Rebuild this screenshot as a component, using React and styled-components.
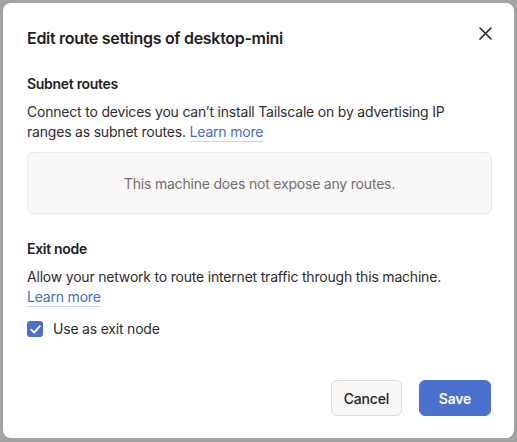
import React from 'react';
import styled, { createGlobalStyle } from 'styled-components';

const GlobalStyle = createGlobalStyle`
  html, body {
    margin: 0;
    padding: 0;
    background: #a3a3a3;
  }
  body {
    font-family: Inter, "Noto Sans", sans-serif;
    color: #1f1e1e;
    letter-spacing: -0.2px;
    -webkit-font-smoothing: antialiased;
  }
`;

const Overlay = styled.div`
  width: 517px;
  height: 442px;
  padding: 3px 3px 4px 3px;
  box-sizing: border-box;
  background: #a3a3a3;
`;

const Dialog = styled.div`
  width: 511px;
  height: 435px;
  box-sizing: border-box;
  background: #fff;
  border-radius: 8px;
  padding: 21px 22px 22px 24px;
  display: flex;
  flex-direction: column;
`;

const Header = styled.div`
  display: flex;
  justify-content: space-between;
  align-items: flex-start;
`;

const Title = styled.h2`
  margin: 0;
  margin-top: 2px;
  font-size: 16px;
  line-height: 24px;
  font-weight: 600;
  letter-spacing: -0.3px;
  color: #232222;
`;

const CloseButton = styled.button`
  background: transparent;
  border: none;
  padding: 0;
  margin: -1px -3px 0 0;
  width: 20px;
  height: 20px;
  display: flex;
  align-items: center;
  justify-content: center;
  cursor: pointer;
  color: #232222;
`;

const Section = styled.section`
  margin-top: ${p => p.$top || 0}px;
`;

const Heading = styled.h3`
  margin: 0;
  font-size: 14px;
  line-height: 20px;
  font-weight: 600;
  letter-spacing: -0.3px;
  color: #232222;
`;

const Text = styled.p`
  margin: 8px 0 0;
  font-size: 14px;
  line-height: 20px;
  color: #2f2e2e;
`;

const Link = styled.a`
  white-space: nowrap;
  color: #4b6bc6;
  text-decoration: underline;
  text-decoration-color: #c5d3f5;
  text-underline-offset: 4px;
`;

const EmptyBox = styled.div`
  margin-top: 10px;
  height: 62px;
  box-sizing: border-box;
  background: #f9f8f7;
  border: 1px solid #ece9e7;
  border-radius: 6px;
  display: flex;
  align-items: center;
  justify-content: center;
  font-size: 14px;
  color: #736f6d;
`;

const CheckRow = styled.label`
  margin-top: 12px;
  display: flex;
  align-items: center;
  gap: 10px;
  font-size: 14px;
  line-height: 20px;
  color: #2f2e2e;
`;

const Box = styled.span`
  width: 16px;
  height: 16px;
  border-radius: 3px;
  background: #4b6fcd;
  display: flex;
  align-items: center;
  justify-content: center;
`;

const Footer = styled.div`
  margin-top: auto;
  display: flex;
  justify-content: flex-end;
  gap: 17px;
  margin-right: 1px;
`;

const Button = styled.button`
  height: 36px;
  padding: 0 12px;
  border-radius: 6px;
  font-family: inherit;
  letter-spacing: -0.2px;
  font-size: 14px;
  font-weight: ${p => (p.$primary ? 600 : 500)};
  background: ${p => (p.$primary ? '#4b70cd' : '#f9f8f7')};
  color: ${p => (p.$primary ? '#fff' : '#232222')};
  border: 1px solid ${p => (p.$primary ? '#4b70cd' : '#dedbd8')};
  min-width: ${p => (p.$primary ? 72 : 0)}px;
  cursor: pointer;
`;

export default function App() {
  return (
    <>
      <GlobalStyle />
      <Overlay>
        <Dialog>
          <Header>
            <Title>Edit route settings of desktop-mini</Title>
            <CloseButton aria-label="Close">
              <svg width="13" height="13" viewBox="0 0 13 13" fill="none" stroke="currentColor" strokeWidth="1.6" strokeLinecap="round">
                <path d="M1 1l11 11M12 1L1 12" />
              </svg>
            </CloseButton>
          </Header>

          <Section $top={24}>
            <Heading>Subnet routes</Heading>
            <Text>
              Connect to devices you can’t install Tailscale on by advertising IP ranges as subnet routes.{' '}
              <Link href="#">Learn more</Link>
            </Text>
            <EmptyBox>This machine does not expose any routes.</EmptyBox>
          </Section>

          <Section $top={25}>
            <Heading>Exit node</Heading>
            <Text>
              Allow your network to route internet traffic through this machine.{' '}
              <Link href="#">Learn more</Link>
            </Text>
            <CheckRow>
              <Box>
                <svg width="11" height="9" viewBox="0 0 11 9" fill="none" stroke="#fff" strokeWidth="1.8" strokeLinecap="round" strokeLinejoin="round">
                  <path d="M1.2 4.6l3 3 5.6-6.4" />
                </svg>
              </Box>
              Use as exit node
            </CheckRow>
          </Section>

          <Footer>
            <Button>Cancel</Button>
            <Button $primary>Save</Button>
          </Footer>
        </Dialog>
      </Overlay>
    </>
  );
}
